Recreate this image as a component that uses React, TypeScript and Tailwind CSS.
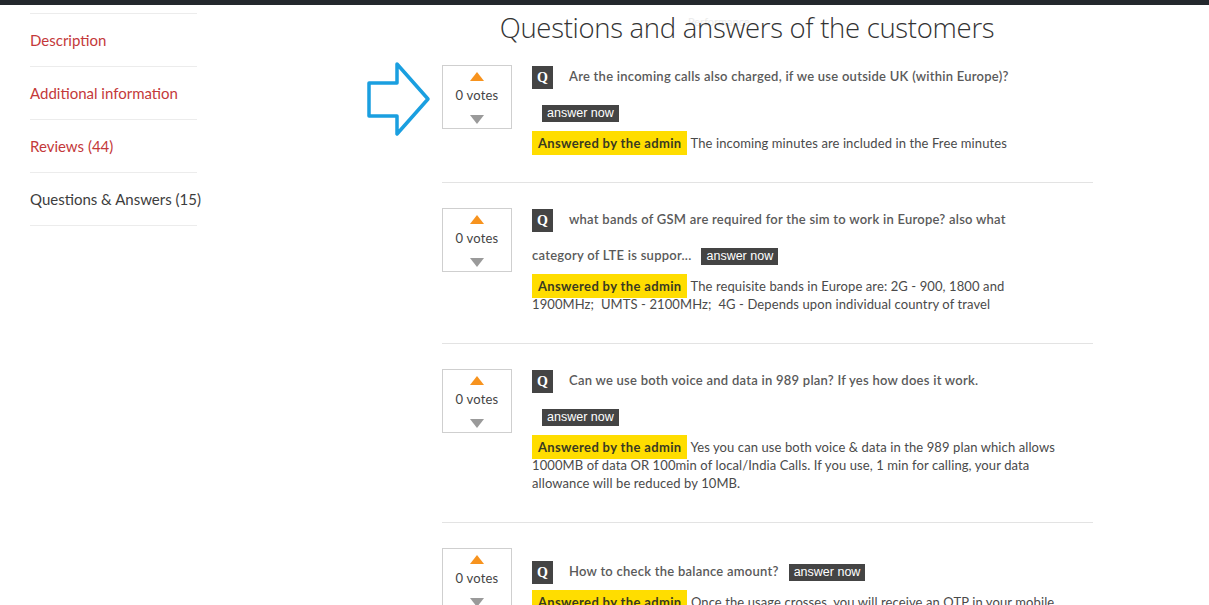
import React from 'react';

interface QA {
  question: string;
  answer: string;
  lowered?: boolean;
}

const items: QA[] = [
  {
    question: 'Are the incoming calls also charged, if we use outside UK (within Europe)?',
    answer: 'The incoming minutes are included in the Free minutes',
  },
  {
    question: 'what bands of GSM are required for the sim to work in Europe? also what category of LTE is suppor...',
    answer: 'The requisite bands in Europe are: 2G - 900, 1800 and 1900MHz;\u00a0 UMTS - 2100MHz;\u00a0 4G - Depends upon individual country of travel',
  },
  {
    question: 'Can we use both voice and data in 989 plan? If yes how does it work.',
    answer:
      'Yes you can use both voice & data in the 989 plan which allows 1000MB of data OR 100min of local/India Calls. If you use, 1 min for calling, your data allowance will be reduced by 10MB.',
  },
  {
    question: 'How to check the balance amount?',
    answer: 'Once the usage crosses, you will receive an OTP in your mobile with the details of balance',
    lowered: true,
  },
];

const tabs = [
  { label: 'Description', active: false },
  { label: 'Additional information', active: false },
  { label: 'Reviews (44)', active: false },
  { label: 'Questions & Answers (15)', active: true },
];

// blue outline arrow pointing at the first vote box
const PointerArrow: React.FC = () => (
  <svg
    className="absolute left-[-76px] top-[-3px]"
    width="66"
    height="76"
    viewBox="0 0 66 76"
    fill="none"
  >
    <path
      d="M3 21 H31 V2 L62 37 L31 72 V54 H3 Z"
      stroke="#1a9fe0"
      strokeWidth="3.5"
      strokeLinejoin="round"
    />
  </svg>
);

const VoteBox: React.FC = () => (
  <div className="w-[70px] h-[64px] shrink-0 border border-[#cfcfcf] flex flex-col items-center pt-[6px]">
    <div className="w-0 h-0 border-l-[7px] border-r-[7px] border-b-[9px] border-l-transparent border-r-transparent border-b-[#f7931e]" />
    <div className="text-[13px] leading-[16px] text-[#444] mt-[6px] tracking-[0.2px]">0 votes</div>
    <div className="w-0 h-0 border-l-[7px] border-r-[7px] border-t-[9px] border-l-transparent border-r-transparent border-t-[#9a9a9a] mt-[12px]" />
  </div>
);

const QuestionItem: React.FC<{ item: QA; first: boolean }> = ({ item, first }) => (
  <div className="relative flex pb-[30px] mb-[25px] border-b border-[#e3e3e3]">
    {first && <PointerArrow />}
    <VoteBox />
    <div className={`ml-[20px] w-[526px] ${item.lowered ? 'pt-[12px]' : ''}`}>
      <p className="text-[13px] leading-[36px] font-semibold text-[#5a5a5a] -mt-[7px] tracking-[0.25px]">
        <span className="inline-block align-middle w-[21px] h-[23px] leading-[23px] bg-[#444] text-white text-center font-bold text-[14px] mr-[16px] tracking-normal [font-family:'Liberation_Serif',serif]">
          Q
        </span>
        {item.question}
        <span className="inline-block align-middle ml-[10px] px-[5px] h-[17px] leading-[17px] bg-[#444] text-white text-[12.5px] font-normal tracking-normal [font-family:'Liberation_Sans',Arial,sans-serif]">
          answer now
        </span>
      </p>
      <p className="text-[13px] leading-[18px] text-[#4a4a4a] mt-[4px] tracking-[0.1px]">
        <span className="bg-[#ffdd00] px-[6px] py-[4px] font-bold text-[#3a3a20] tracking-[0.35px]">
          Answered by the admin
        </span>{' '}
        {item.answer}
      </p>
    </div>
  </div>
);

export default function App() {
  return (
    <div className="w-[1209px] h-[605px] overflow-hidden bg-white [font-family:Lato,'Liberation_Sans',sans-serif]">
      <div className="h-[5px] bg-[#23282d]" />
      <div className="flex">
        <ul className="w-[167px] ml-[30px] mt-[8px] shrink-0 border-t border-[#ececec]">
          {tabs.map((t) => (
            <li
              key={t.label}
              className={`h-[53px] flex items-center whitespace-nowrap border-b border-[#ececec] text-[15px] ${
                t.active ? 'text-[#3d3d3d]' : 'text-[#c4393a]'
              }`}
            >
              {t.label}
            </li>
          ))}
        </ul>
        <div className="ml-[245px] w-[651px]">
          <div className="relative h-[60px]">
            <div className="absolute left-[246px] top-[9px] text-[11px] text-[#ececec]">Performance</div>
            <h2 className="relative text-center pt-[6px] text-[27.5px] leading-[34px] font-light text-[#333] [font-family:'Open_Sans',sans-serif] tracking-[-0.3px] -ml-[41px]">
              Questions and answers of the customers
            </h2>
          </div>
          {items.map((it, i) => (
            <QuestionItem key={i} item={it} first={i === 0} />
          ))}
        </div>
      </div>
    </div>
  );
}
